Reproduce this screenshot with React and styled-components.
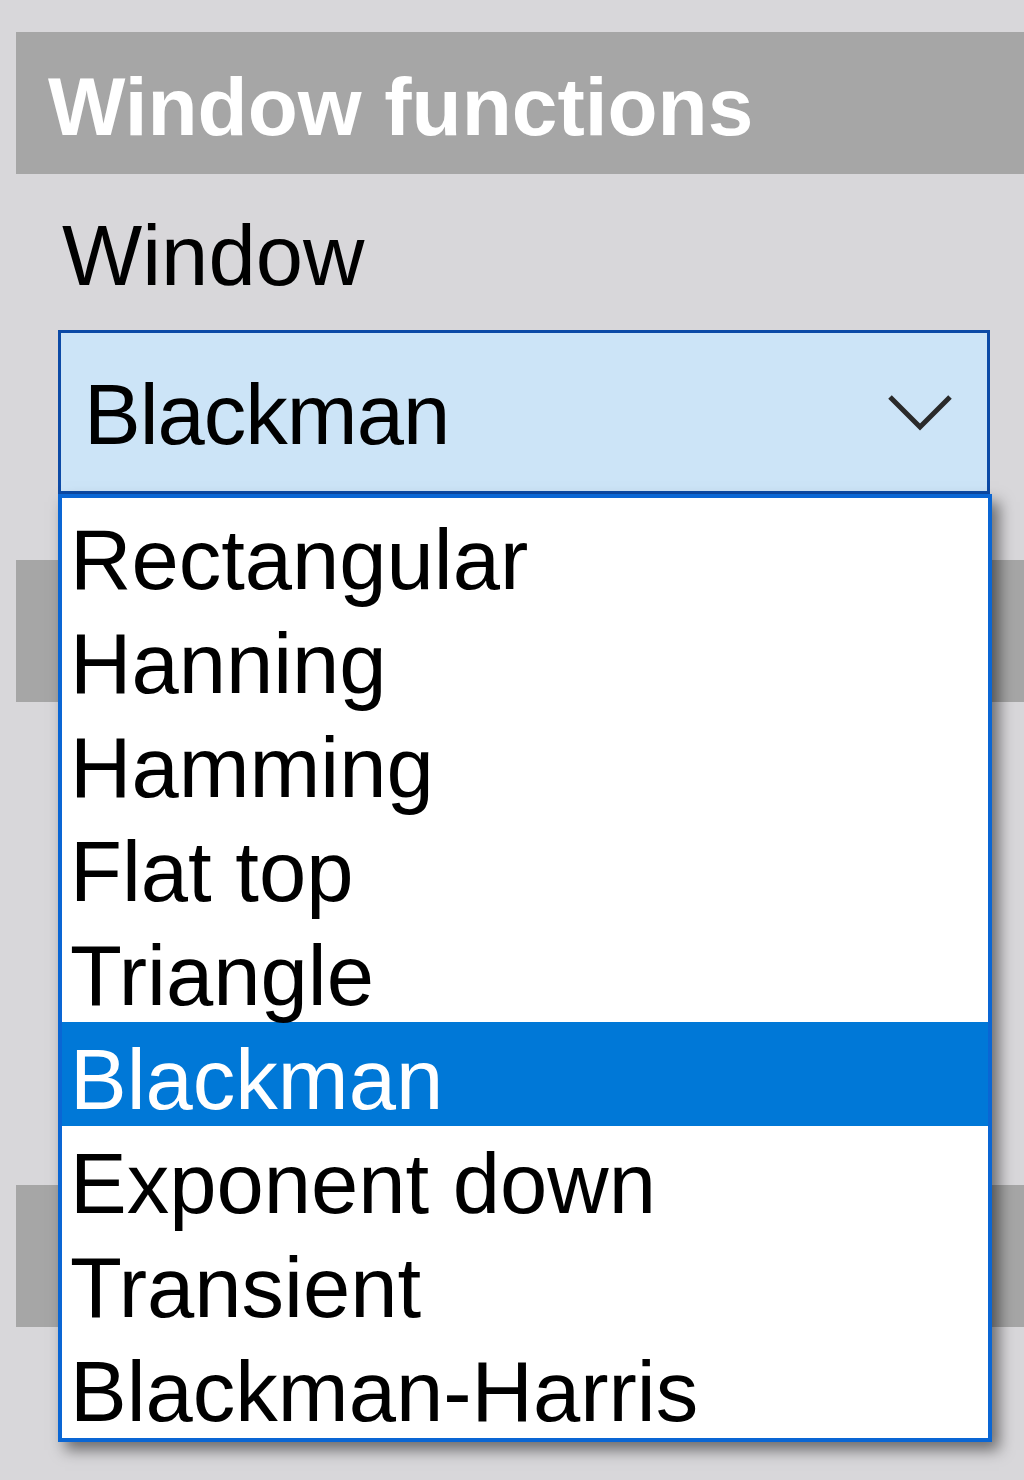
import React from "react";
import styled, { createGlobalStyle } from "styled-components";

const GlobalStyle = createGlobalStyle`
  html, body {
    margin: 0;
    padding: 0;
    background: #d8d7da;
    overflow: hidden;
  }
  body {
    font-family: "Liberation Sans", Arial, sans-serif;
    color: #000;
  }
`;

const Page = styled.div`
  padding: 32px 0 0 16px;
  width: 1024px;
  height: 1480px;
  box-sizing: border-box;
`;

const Section = styled.section`
  display: flex;
  flex-direction: column;
`;

const SectionHeader = styled.h2`
  margin: 0;
  height: 142px;
  box-sizing: border-box;
  padding: 10px 0 0 32px;
  background: #a6a6a6;
  color: #ffffff;
  font-family: "Liberation Sans", Arial, sans-serif;
  font-weight: 700;
  font-size: 82px;
  line-height: 130px;
  white-space: nowrap;
  overflow: hidden;
`;

const SectionBody = styled.div`
  display: flex;
  flex-direction: column;
  padding: 0 0 ${(p) => p.$padBottom || 0}px 42px;
  min-height: ${(p) => p.$minHeight || 0}px;
  box-sizing: border-box;
`;

const FieldLabel = styled.label`
  display: block;
  margin: 34px 0 0 4px;
  font-size: 85px;
  line-height: 95px;
  color: #000;
`;

const SelectWrap = styled.div`
  position: relative;
  width: 932px;
  margin-top: 27px;
`;

const SelectBox = styled.div`
  height: 164px;
  box-sizing: border-box;
  border: 3px solid #0c4aa6;
  background: #cce4f7;
  display: flex;
  align-items: center;
  justify-content: space-between;
  padding: 5px 0 0 23px;
  font-size: 85px;
  line-height: 95px;
  letter-spacing: -1px;
  color: #000;
`;

const Chevron = styled.svg`
  width: 70px;
  height: 40px;
  margin: -6px 32px 0 0;
  flex: none;
`;

const ListBox = styled.ul`
  position: absolute;
  top: 100%;
  left: 0;
  width: calc(100% + 2px);
  margin: 0;
  padding: 4px 0 0;
  list-style: none;
  box-sizing: border-box;
  border: 4px solid #0a66d4;
  background: #ffffff;
  box-shadow: 7px 8px 14px rgba(0, 0, 0, 0.5);
  z-index: 2;
`;

const Option = styled.li`
  height: 104px;
  box-sizing: border-box;
  padding: 12px 0 0 8px;
  font-size: 85px;
  line-height: 92px;
  white-space: nowrap;
  background: ${(p) => (p.$selected ? "#0078d7" : "transparent")};
  color: ${(p) => (p.$selected ? "#ffffff" : "#000000")};
`;

const options = [
  "Rectangular",
  "Hanning",
  "Hamming",
  "Flat top",
  "Triangle",
  "Blackman",
  "Exponent down",
  "Transient",
  "Blackman-Harris",
];

export default function App() {
  const selected = "Blackman";
  return (
    <>
      <GlobalStyle />
      <Page>
        <Section>
          <SectionHeader>Window functions</SectionHeader>
          <SectionBody $padBottom={66}>
            <FieldLabel>Window</FieldLabel>
            <SelectWrap>
              <SelectBox>
                <span>{selected}</span>
                <Chevron viewBox="0 0 70 40" aria-hidden="true">
                  <polyline
                    points="5,5 35,35 65,5"
                    fill="none"
                    stroke="#2a2a2a"
                    strokeWidth="5"
                  />
                </Chevron>
              </SelectBox>
              <ListBox role="listbox">
                {options.map((o) => (
                  <Option key={o} $selected={o === selected} role="option">
                    {o}
                  </Option>
                ))}
              </ListBox>
            </SelectWrap>
          </SectionBody>
        </Section>
        <Section>
          <SectionHeader aria-hidden="true" />
          <SectionBody $minHeight={483} />
        </Section>
        <Section>
          <SectionHeader aria-hidden="true" />
        </Section>
      </Page>
    </>
  );
}
